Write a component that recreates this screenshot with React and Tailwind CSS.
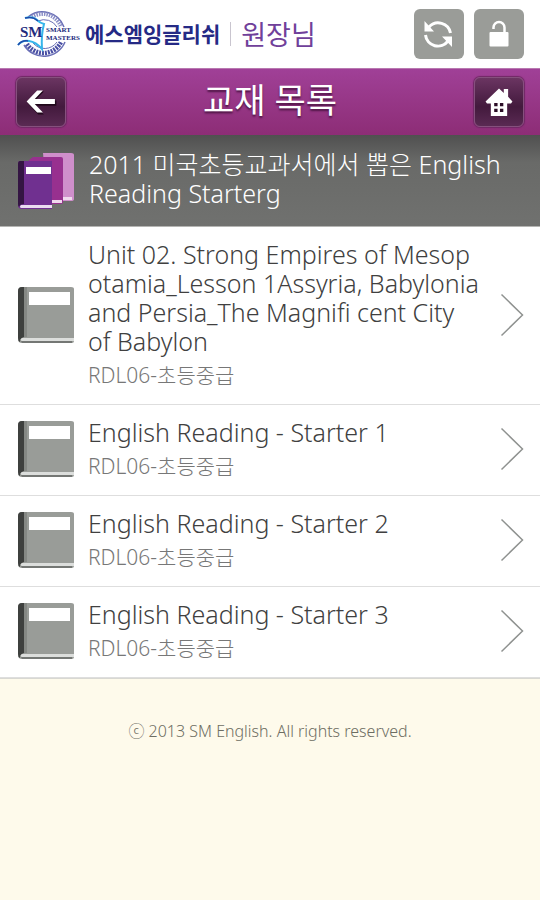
import React from "react";

const ITEMS = [
  {
    lines: [
      "Unit 02. Strong Empires of Mesop",
      "otamia_Lesson 1Assyria, Babylonia",
      "and Persia_The Magnifi cent City",
      "of Babylon",
    ],
    code: "RDL06-초등중급",
  },
  { lines: ["English Reading - Starter 1"], code: "RDL06-초등중급" },
  { lines: ["English Reading - Starter 2"], code: "RDL06-초등중급" },
  { lines: ["English Reading - Starter 3"], code: "RDL06-초등중급" },
];

function Emblem() {
  return (
    <svg viewBox="0 0 66 50" className="h-[50px] w-[66px] shrink-0" aria-hidden="true">
      <g fill="none" stroke="#6a6fb6">
        <path d="M12 8 A23 23 0 0 1 48 18" strokeWidth="1.500" />
        <path d="M16 8 A19.500 19.500 0 0 1 45 18" strokeWidth="4" strokeDasharray="1.500 1" stroke="#8a8ec6" />
        <path d="M22 12 A15 15 0 0 1 41 18" strokeWidth="1" />
        <path d="M8 36 A23 23 0 0 0 49 33" strokeWidth="1.500" />
        <path d="M11 35 A19.500 19.500 0 0 0 45 33" strokeWidth="4.500" strokeDasharray="2 1" stroke="#4a50a4" />
        <path d="M17 34 A15 15 0 0 0 41 33" strokeWidth="1" />
      </g>
      <path d="M9 9 Q17 7 21 11 Q24 14 28 15 Q25 26 26 40 Q20 33 13 32 Q6 31 2 36" fill="none" stroke="#35b5ea" strokeWidth="2" />
      <path d="M9 9 Q17 7 22 12 M2 36 Q6 31 12 32" fill="none" stroke="#2148a8" strokeWidth="1.500" />
      <text x="4" y="28" fontFamily="Liberation Serif, serif" fontWeight="700" fontSize="15" fill="#232a7c">SM</text>
      <text x="30" y="23" fontFamily="Liberation Serif, serif" fontWeight="700" fontSize="7" fill="#232a7c">SMART</text>
      <text x="30" y="31" fontFamily="Liberation Serif, serif" fontWeight="700" fontSize="7" fill="#232a7c">MASTERS</text>
    </svg>
  );
}

function RefreshIcon() {
  return (
    <svg viewBox="0 0 50 50" className="size-full" aria-hidden="true">
      <g fill="none" stroke="#fff" strokeWidth="3">
        <path d="M15 18 A12.500 12.500 0 0 1 36.500 24" />
        <path d="M11.500 26 A12.500 12.500 0 0 0 34 32" />
      </g>
      <path d="M10.500 12 V22.500 H20 Z M38 38 V27.500 H28 Z" fill="#fff" />
    </svg>
  );
}

function LockIcon() {
  return (
    <svg viewBox="0 0 50 50" className="size-full" aria-hidden="true">
      <path d="M19.500 20 V18.500 A5.500 5.500 0 0 1 30.500 18.500 V24" fill="none" stroke="#fff" strokeWidth="2.500" />
      <rect x="15.500" y="23" width="19" height="14.500" rx="1" fill="#fff" />
    </svg>
  );
}

function BackIcon() {
  return (
    <svg viewBox="0 0 50 50" className="size-full" aria-hidden="true">
      <path d="M11 26 L22 14 H28 L19 23.500 H41 V29 H19 L28 38 H22 Z" fill="#20081b" />
      <path d="M10 24.500 L21 13 H27 L18.500 22 H39.500 V27 H18.500 L27 36 H21 Z" fill="#fff" />
    </svg>
  );
}

function HomeIcon() {
  return (
    <svg viewBox="0 0 50 50" className="size-full" aria-hidden="true">
      <path
        d="M25 11 L30 15.500 V11.500 H34.500 V19.500 L39 24.500 L37.500 26.500 H33.500 V39.500 H16.500 V26.500 H12.500 L11 24.500 Z"
        fill="#fff"
      />
      <path d="M20 26h3.500v3.500h-3.500z M26 26h3.500v3.500h-3.500z M20 32h3.500v3.500h-3.500z M26 32h3.500v3.500h-3.500z" fill="#2b0d26" />
    </svg>
  );
}

function StackIcon() {
  return (
    <svg viewBox="-1 0 58 58" className="size-[58px] shrink-0" aria-hidden="true">
      <path d="M26 1 H54 Q57 1 57 3 V47 Q57 49 54 49 H30 Z" fill="#cf8fcb" />
      <path d="M40 45 H55 V48 H40 Z" fill="#f0d9ee" />
      <path d="M16 5 H44 Q46 5 46 7 V50 Q46 52 44 52 H20 L12 8 Z" fill="#98308f" />
      <path d="M34 48 H45 V51 H34 Z" fill="#f0d9ee" />
      <path d="M3 9 Q1 9 1 12 V53 Q1 57 5 57 H35 V9 Z" fill="#703090" />
      <path d="M3 9 H7 V52 Q3 52 2 55 Q1 54 1 52 V12 Q1 9 3 9 Z" fill="#341543" />
      <path d="M4 53 H35 V56 H4 Q2 55 4 53 Z" fill="#eadcf0" />
      <rect x="9" y="15" width="25" height="7" fill="#fff" />
    </svg>
  );
}

function BookIcon() {
  return (
    <svg viewBox="-1 0 58 58" className="size-[58px] shrink-0" aria-hidden="true">
      <path d="M5 1 H54 Q57 1 57 3 V55 Q57 57 55 57 H5 Q1 57 1 53 V5 Q1 1 5 1 Z" fill="#999c98" />
      <path d="M5 1 H7 V51 Q3 52 3 56 Q1 55 1 52 V5 Q1 1 5 1 Z" fill="#3e403e" />
      <path d="M7 1 h3 V51 h-3 Z" fill="#858884" />
      <path d="M5 52 H57 V55 H5 Q2 54 5 52 Z" fill="#dcdedc" />
      <path d="M4 55 H55 V57 H5 Z" fill="#747774" />
      <rect x="12" y="6" width="41" height="13" fill="#fff" />
    </svg>
  );
}

function Chevron() {
  return (
    <svg viewBox="0 0 24 44" className="h-[44px] w-[24px] shrink-0" aria-hidden="true">
      <path d="M1.500 1.500 L22.500 22 L1.500 42.500" fill="none" stroke="#8f9290" strokeWidth="1.500" />
    </svg>
  );
}

export default function App() {
  return (
    <div className="min-h-screen bg-[#fefaeb] font-['Noto_Sans','Noto_Sans_CJK_KR',sans-serif]">
      <header className="flex h-[68px] items-center justify-between bg-white px-4">
        <a href="#" className="flex items-center font-['Noto_Sans_CJK_KR',sans-serif]">
          <Emblem />
          <span className="ml-[3px] text-[21px] font-bold text-[#252a85]">에스엠잉글리쉬</span>
          <span className="mx-[10px] h-6 w-px bg-[#c9c5cf]" />
          <span className="text-[27px] font-normal text-[#70409a]">원장님</span>
        </a>
        <div className="flex gap-[10px]">
          <button type="button" aria-label="새로고침" className="size-[50px] rounded-md bg-[#9a9c98]">
            <RefreshIcon />
          </button>
          <button type="button" aria-label="잠금" className="size-[50px] rounded-md bg-[#9a9c98]">
            <LockIcon />
          </button>
        </div>
      </header>

      <div className="flex h-[67px] items-center justify-between border-t border-[#b878b0] bg-linear-to-b from-[#a04097] to-[#8d2d76] px-4">
        <button
          type="button"
          aria-label="뒤로"
          className="size-[50px] rounded-md border border-[#85507d] bg-linear-to-b from-[#6b3562] via-[#431a3d] via-60% to-[#5a2a53] shadow-[0_0_1px_1px_#6f2864]"
        >
          <BackIcon />
        </button>
        <h1 className="pb-1 text-[34px] leading-[48px] font-normal text-white [text-shadow:0_2px_2px_#4d1544]">
          교재 목록
        </h1>
        <button
          type="button"
          aria-label="홈"
          className="size-[50px] rounded-md border border-[#85507d] bg-linear-to-b from-[#6b3562] via-[#431a3d] via-60% to-[#5a2a53] shadow-[0_0_1px_1px_#6f2864]"
        >
          <HomeIcon />
        </button>
      </div>

      <section className="flex h-[92px] items-center gap-[15px] border-b border-[#b5b5b3] bg-linear-to-b from-[#505050] via-[#696a68] via-30% to-[#70716f] px-4">
        <StackIcon />
        <h2 className="pb-[3px] text-[25px] leading-[29px] font-light whitespace-nowrap text-white">
          2011 미국초등교과서에서 뽑은 English
          <br />
          Reading Starterg
        </h2>
      </section>

      <ul className="border-b border-[#d8d8d2] bg-white">
        {ITEMS.map((item) => (
          <li key={item.lines[0]} className="border-b border-[#dedede]">
            <a href="#" className="flex items-center gap-[14px] px-4 pt-[13px] pb-[15px]">
              <BookIcon />
              <span className="min-w-0 flex-1 whitespace-nowrap">
                <span className="block text-[25px] leading-[29px] font-light text-[#404040]">
                  {item.lines.map((line) => (
                    <span key={line} className="block">
                      {line}
                    </span>
                  ))}
                </span>
                <span className="mt-[5px] block text-[21px] leading-[28px] font-light text-[#777777]">{item.code}</span>
              </span>
              <Chevron />
            </a>
          </li>
        ))}
      </ul>

      <footer className="pt-[40px] text-center text-[16px] leading-[24px] font-light text-[#6d6d62]">
        ⓒ 2013 SM English. All rights reserved.
      </footer>
    </div>
  );
}
